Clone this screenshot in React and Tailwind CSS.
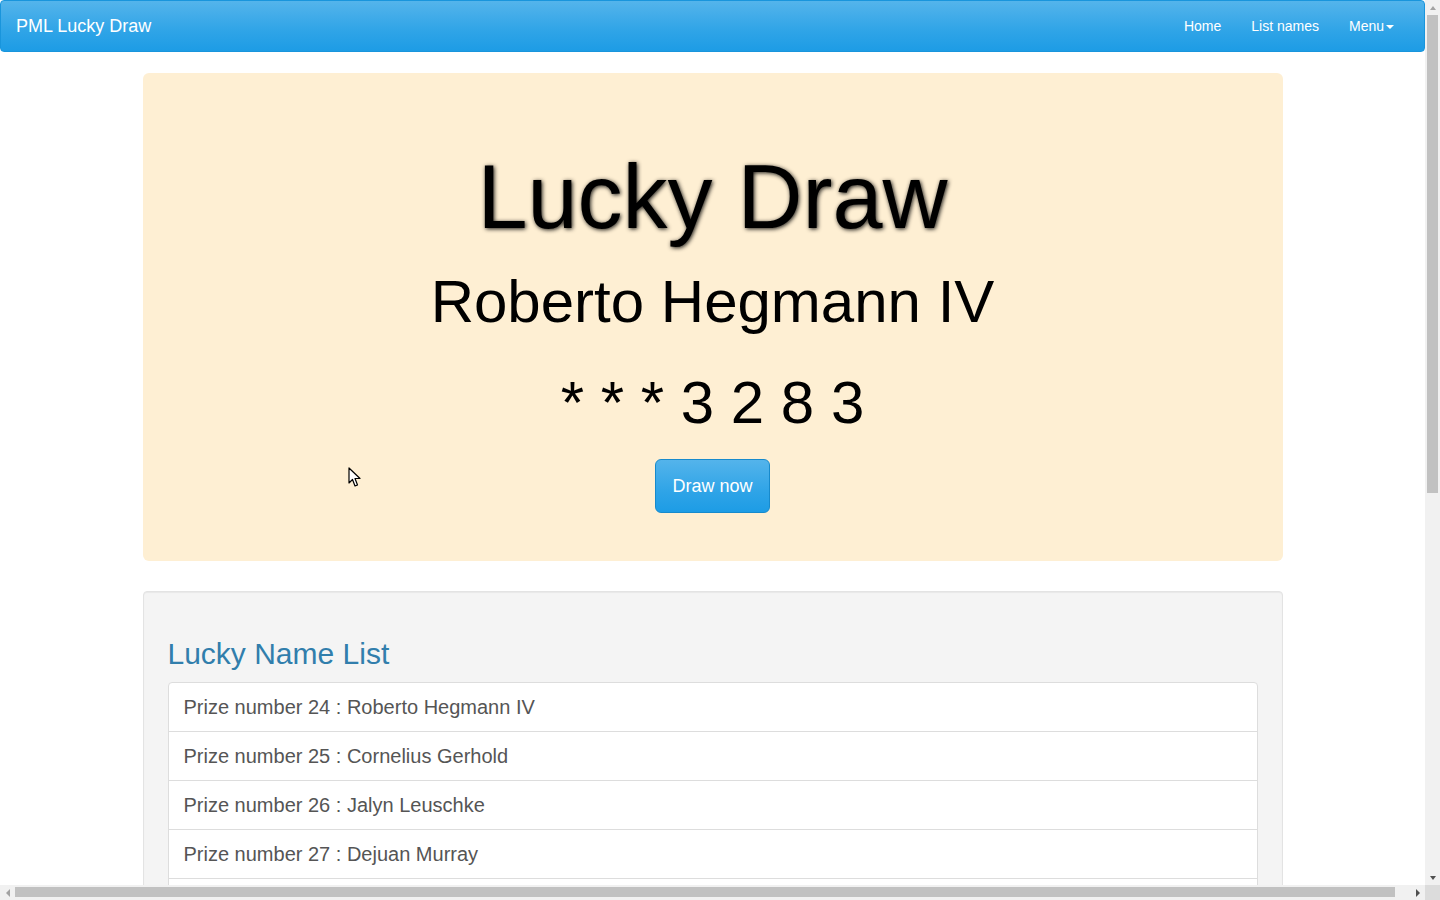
import React from "react";

const winners = [
  "Roberto Hegmann IV",
  "Cornelius Gerhold",
  "Jalyn Leuschke",
  "Dejuan Murray",
  "Maritza Kuhlman",
];

function Cursor() {
  // mouse pointer that was left over the jumbotron
  return (
    <svg className="absolute left-[348px] top-[467px]" width="14" height="21" viewBox="0 0 14 21">
      <path d="M1 1 L1 16 L4.5 12.5 L7 19 L9.5 18 L7 11.5 L12 11.5 Z" fill="#fff" stroke="#000" strokeWidth="1.2" strokeLinejoin="round" />
    </svg>
  );
}

// browser scrollbars as seen in the screenshot
function VScrollbar() {
  return (
    <div className="w-[15px] shrink-0 bg-[#f1f1f1] flex flex-col">
      <div className="h-[15px] flex items-center justify-center">
        <span className="border-x-[3.5px] border-b-[4px] border-x-transparent border-b-[#a3a3a3]" />
      </div>
      <div className="flex-1 px-[2px]">
        <div className="h-[478px] bg-[#c1c1c1]" />
      </div>
      <div className="h-[15px] flex items-center justify-center">
        <span className="border-x-[3.5px] border-t-[4px] border-x-transparent border-t-[#505050]" />
      </div>
    </div>
  );
}

function HScrollbar() {
  return (
    <div className="h-[15px] shrink-0 bg-[#f1f1f1] flex">
      <div className="w-[15px] flex items-center justify-center">
        <span className="border-y-[4px] border-r-[4px] border-y-transparent border-r-[#a3a3a3]" />
      </div>
      <div className="flex-1 py-[2px] pr-[15px]">
        <div className="h-[10px] bg-[#c1c1c1]" />
      </div>
      <div className="w-[15px] flex items-center justify-center">
        <span className="border-y-[4px] border-l-[4px] border-y-transparent border-l-[#505050]" />
      </div>
      <div className="w-[15px] bg-[#dcdcdc]" />
    </div>
  );
}

export default function App() {
  return (
    <div className="relative h-screen w-screen overflow-hidden bg-white flex flex-col font-['Liberation_Sans',Arial,sans-serif] text-[14px] text-[#555]">
      <div className="flex flex-1 min-h-0">
        <div className="flex-1 overflow-hidden">
          {/* navbar */}
          <nav className="h-[52px] rounded-[4px] border border-[#1995dc] bg-[linear-gradient(#54b4eb,#2fa4e7_60%,#1d9ce5)] flex items-center justify-between">
            <a className="pl-[15px] text-[18px] text-white">PML Lucky Draw</a>
            <ul className="flex items-center pr-[16px] text-[14px] text-white">
              <li className="px-[15px]">Home</li>
              <li className="px-[15px]">List names</li>
              <li className="pl-[15px] pr-[14px] flex items-center">
                Menu
                <span className="ml-[2px] mt-[1px] border-x-[4px] border-t-[4px] border-x-transparent border-t-white" />
              </li>
            </ul>
          </nav>

          <div className="w-[1140px] mx-auto pt-[21px] pb-[20px]">
            {/* jumbotron */}
            <div className="rounded-[6px] bg-[#feefd3] h-[488px] flex flex-col items-center text-black">
              <h1 className="mt-[74px] text-[90px] leading-[100px] [text-shadow:1px_1px_4px_rgba(0,0,0,0.9)]">Lucky Draw</h1>
              <div className="mt-[22px] text-[60px] leading-[66px]">Roberto Hegmann IV</div>
              <div className="mt-[35px] text-[60px] leading-[66px]">* * * 3 2 8 3</div>
              <button className="mt-[23px] h-[54px] w-[115px] rounded-[6px] border border-[#178acc] bg-[linear-gradient(#54b4eb,#2fa4e7_60%,#1d9ce5)] text-[18px] text-white">
                Draw now
              </button>
            </div>

            {/* well */}
            <div className="mt-[30px] rounded-[4px] border border-[#e3e3e3] bg-[#f4f4f4] shadow-[inset_0_1px_1px_rgba(0,0,0,0.05)] px-[24px] pt-[45px] pb-[19px]">
              <h2 className="text-[30px] leading-[33px] text-[#317eac] mb-[12px]">Lucky Name List</h2>
              <ul className="rounded-[4px] border border-[#ddd] bg-white divide-y divide-[#ddd]">
                {winners.map((name, i) => (
                  <li key={i} className="h-[49px] px-[15px] flex items-center text-[20px] text-[#555]">
                    Prize number {24 + i} : {name}
                  </li>
                ))}
              </ul>
            </div>
          </div>
        </div>
        <VScrollbar />
      </div>
      <HScrollbar />
      <Cursor />
    </div>
  );
}
